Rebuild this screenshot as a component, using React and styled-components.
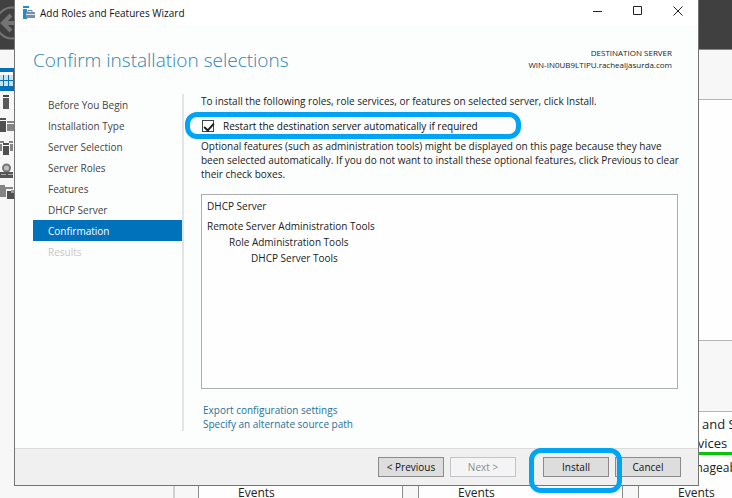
import React from "react";
import styled, { createGlobalStyle } from "styled-components";

const Global = createGlobalStyle`
  * { box-sizing: border-box; }
  body {
    margin: 0;
    background: #f7f7f7;
    color: #222;
    font: 10px/14px "Open Sans", "Noto Sans", sans-serif;
  }
  h1, h2, p, ul { margin: 0; padding: 0; }
  ul { list-style: none; }
`;

const Desktop = styled.div`
  position: relative;
  min-height: 100vh;
  overflow: hidden;
`;

/* Server Manager, behind the wizard */
const Manager = styled.div`
  position: absolute;
  inset: 0;
  display: flex;
  flex-direction: column;
  overflow: hidden;
`;

const ManagerBar = styled.div`
  flex: none;
  height: 50px;
  background: #404040;
  border-bottom: 1px solid #8a8a8a;
`;

const BackIcon = styled.svg`
  display: block;
  width: 32px;
  height: 50px;
  margin-left: -3px;
`;

const ManagerBody = styled.div`
  flex: 1;
  display: flex;
  min-height: 0;
`;

const SideBar = styled.div`
  flex: none;
  width: 175px;
  padding-top: 18px;
  border-right: 2px solid #d0d0d0;
`;

const SideItem = styled.div`
  height: 23px;
  background: ${(p) => (p.$active ? "#0072bc" : "transparent")};

  svg {
    display: block;
    width: 15px;
    height: 23px;
  }
`;

const Dashboard = styled.div`
  flex: 1;
  min-width: 0;
  display: flex;
  flex-direction: column;
`;

const Strip = styled.div`
  flex: none;
  height: ${(p) => p.$height};
  background: ${(p) => (p.$light ? "#fefefe" : "#f7f7f7")};
  border-bottom: 1px solid #b4b4b4;
`;

const Tiles = styled.div`
  flex: 1;
  display: grid;
  grid-template-columns: repeat(3, 205px);
  gap: 15px;
  padding-left: 23px;
`;

const Tile = styled.section`
  display: grid;
  grid-template-rows: 43px 26px 24px;
  align-items: center;
  background: #fefefe;
  border: 1px solid #8c8c8c;
  border-top: 0;
  font-size: 12px;
  line-height: 14px;
  white-space: nowrap;
`;

const TileTitle = styled.h2`
  align-self: stretch;
  padding: 3px 0 0 39px;
  border-bottom: 3px solid #0cc20c;
  font-size: 13px;
  font-weight: 400;
  line-height: 19px;
`;

const TileRow = styled.p`
  grid-row: ${(p) => p.$row};
  padding-left: 39px;
`;

/* Wizard window */
const Wizard = styled.main`
  position: relative;
  margin: 0 33px 0 14px;
  background: #fcfdfd;
  border: 1px solid #747474;
  border-top: 0;
`;

const TitleBar = styled.header`
  display: flex;
  align-items: center;
  height: 25px;
  padding: 0 6px 0 8px;
  gap: 5px;
  background: #fff;
  color: #111;
`;

const TitleText = styled.span`
  flex: 1;
`;

const WindowButton = styled.button`
  width: 28px;
  height: 24px;
  margin-left: 12px;
  padding: 0;
  border: 0;
  background: transparent;

  svg {
    display: block;
    margin: auto;
  }
`;

const Head = styled.div`
  display: flex;
  justify-content: space-between;
  height: 69px;
  padding: 20px 26px 0 18px;
`;

const Heading = styled.h1`
  color: #3484ad;
  font-size: 19px;
  font-weight: 300;
  line-height: 30px;
`;

const Destination = styled.p`
  padding-top: 2px;
  font-size: 8px;
  line-height: 12px;
  text-align: right;
`;

const Columns = styled.div`
  display: flex;
  padding: 0 20px 17px 18px;
`;

const Steps = styled.nav`
  flex: none;
  width: 151px;
  border-right: 2px solid #e2e5e7;
`;

const Step = styled.button`
  display: block;
  width: 149px;
  height: 21px;
  padding: 2px 0 0 15px;
  border: 0;
  background: ${(p) => (p.$current ? "#0072bc" : "transparent")};
  color: ${(p) => (p.$current ? "#fff" : p.disabled ? "#c8c8c8" : "#444")};
  font: inherit;
  line-height: 19px;
  text-align: left;
`;

const Content = styled.div`
  flex: 1;
  min-width: 0;
  height: 337px;
  padding-left: 17px;
`;

const Restart = styled.label`
  position: relative;
  display: flex;
  align-items: center;
  gap: 9px;
  width: fit-content;
  height: 27px;
  margin: 4px 0 0 1px;
  color: #111;
`;

const Highlight = styled.span`
  position: absolute;
  inset: ${(p) => p.$inset};
  border: 5px solid #00a4f4;
  border-radius: 12px;
  pointer-events: none;
`;

const CheckBox = styled.input`
  appearance: none;
  width: 12px;
  height: 12px;
  margin: 0;
  border: 1px solid #444;
  background: #fff;

  &:checked::before {
    content: "";
    display: block;
    width: 4px;
    height: 8px;
    margin: 0 3px;
    border: solid #222;
    border-width: 0 2px 2px 0;
    transform: rotate(42deg);
  }
`;

const Intro = styled.p`
  margin-right: -12px;
  color: #222;
`;

const Selections = styled.ul`
  height: 195px;
  margin-top: 13px;
  padding: 3px 5px;
  border: 1px solid #a9adb0;
  background: #fefefe;
  line-height: 16px;
`;

const Selection = styled.li`
  padding-left: ${(p) => p.$level * 22}px;
  margin-bottom: ${(p) => (p.$last ? "4px" : "0")};
`;

const Links = styled.div`
  display: flex;
  flex-direction: column;
  align-items: flex-start;
  padding: 14px 2px 0;

  a {
    color: #1f7299;
    text-decoration: none;
  }
`;

const Footer = styled.footer`
  display: flex;
  justify-content: flex-end;
  height: 37px;
  padding: 8px 17px 0;
  border-top: 1px solid #dcdcdc;
  background: #f0f0f0;
`;

const FooterButton = styled.button`
  width: 66px;
  height: 20px;
  padding: 0;
  border: 1px solid ${(p) => (p.disabled ? "#c4c4c8" : "#8a8a8a")};
  background: ${(p) => (p.disabled ? "#f4f4f4" : "#dddddd")};
  color: ${(p) => (p.disabled ? "#8c8c8c" : "#111")};
  font: inherit;
`;

const ButtonSlot = styled.div`
  position: relative;
  z-index: ${(p) => (p.$raised ? 1 : 0)};
  margin-left: ${(p) => p.$gap};
`;

const STEPS = [
  "Before You Begin",
  "Installation Type",
  "Server Selection",
  "Server Roles",
  "Features",
  "DHCP Server",
  "Confirmation",
  "Results",
];

const SELECTIONS = [
  { name: "DHCP Server", level: 0, last: true },
  { name: "Remote Server Administration Tools", level: 0 },
  { name: "Role Administration Tools", level: 1 },
  { name: "DHCP Server Tools", level: 2 },
];

const SIDE_ICONS = [
  <>
    <path d="M0 4h14v14H0z" fill="#c9e3f3" />
    <path d="M0 4h14v3H0z" fill="#fff" />
    <path d="M3.5 7v11M8.5 7v11M0 12.500h14M13.500 4v14" stroke="#0072bc" />
  </>,
  <>
    <path d="M3 4h6v2H3z" fill="#444" />
    <path d="M3 7h6v11H3z" fill="#5a5a5a" />
  </>,
  <>
    <path d="M0 4h6v2H0zM0 7h6v11H0z" fill="#505050" />
    <path d="M7 7h7v2H7zM7 10h7v7H7z" fill="#858585" />
  </>,
  <>
    <path d="M0 4h4v2H0zM9 4h4v2H9zM0 7h2v7H0zM10 7h3v7h-3z" fill="#858585" />
    <path d="M3 6h6v2H3zM3 9h6v9H3z" fill="#505050" />
  </>,
  <>
    <circle cx="6.5" cy="8" r="3.500" fill="#c0c0c0" stroke="#777" strokeWidth="2" />
    <path d="M0 12h13v6H0z" fill="#555" />
    <path d="M1 14.500h5M8 14.500h5" stroke="#aaa" />
  </>,
  <>
    <path d="M0 2h5v2h8v2H6v8H0z" fill="#858585" />
    <path d="M7 8h6l1 2v6H7z" fill="#505050" />
    <path d="M11 7h3v3h-3z" fill="#999" />
  </>,
];

function ServerManager() {
  return (
    <Manager>
      <ManagerBar>
        <BackIcon viewBox="0 0 32 50" fill="none" stroke="#747474">
          <circle cx="15" cy="23" r="15.500" strokeWidth="2" />
          <path d="M21 23H7M14 15l-8 8 8 8" strokeWidth="4" />
        </BackIcon>
      </ManagerBar>
      <ManagerBody>
        <SideBar>
          {SIDE_ICONS.map((icon, i) => (
            <SideItem key={i} $active={i === 0}>
              <svg viewBox="0 0 15 23">{icon}</svg>
            </SideItem>
          ))}
        </SideBar>
        <Dashboard>
          <Strip $height="50px" />
          <Strip $height="241px" $light />
          <Strip $height="71px" />
          <Tiles>
            <Tile>
              <TileRow $row={3}>Events</TileRow>
            </Tile>
            <Tile>
              <TileRow $row={3}>Events</TileRow>
            </Tile>
            <Tile>
              <TileTitle>
                File and Storage
                <br />
                Services
              </TileTitle>
              <TileRow $row={2}>Manageability</TileRow>
              <TileRow $row={3}>Events</TileRow>
            </Tile>
          </Tiles>
        </Dashboard>
      </ManagerBody>
    </Manager>
  );
}

export default function App() {
  return (
    <Desktop>
      <Global />
      <ServerManager />
      <Wizard>
        <TitleBar>
          <svg width="12" height="13" viewBox="0 0 12 13" aria-hidden="true">
            <path d="M0 0h6v2H0zM0 3h4v10H0z" fill="#1a8fd0" />
            <path d="M5 6V4.500h4V6" fill="none" stroke="#6a8299" />
            <path d="M3 6h9v6H3z" fill="#7890a6" />
            <path d="M3 8.500h9" stroke="#dbe5ec" />
          </svg>
          <TitleText>Add Roles and Features Wizard</TitleText>
          <div>
            <WindowButton aria-label="Minimize">
              <svg width="10" height="10" viewBox="0 0 10 10">
                <path d="M0 5.500h9" stroke="#222" />
              </svg>
            </WindowButton>
            <WindowButton aria-label="Maximize">
              <svg width="10" height="10" viewBox="0 0 10 10">
                <path d="M.5.5h8v8h-8z" fill="none" stroke="#222" />
              </svg>
            </WindowButton>
            <WindowButton aria-label="Close">
              <svg width="10" height="10" viewBox="0 0 10 10">
                <path d="M.5.5l9 9M9.500.5l-9 9" stroke="#222" />
              </svg>
            </WindowButton>
          </div>
        </TitleBar>
        <Head>
          <Heading>Confirm installation selections</Heading>
          <Destination>
            DESTINATION SERVER
            <br />
            WIN-IN0UB9LTIPU.rachealjasurda.com
          </Destination>
        </Head>
        <Columns>
          <Steps aria-label="Wizard steps">
            {STEPS.map((step) => (
              <Step key={step} $current={step === "Confirmation"} disabled={step === "Results"}>
                {step}
              </Step>
            ))}
          </Steps>
          <Content>
            <Intro>
              To install the following roles, role services, or features on selected server, click
              Install.
            </Intro>
            <Restart>
              <CheckBox type="checkbox" defaultChecked />
              Restart the destination server automatically if required
              <Highlight $inset="0 -43px 0 -17px" />
            </Restart>
            <Intro>
              Optional features (such as administration tools) might be displayed on this page
              because they have
              <br />
              been selected automatically. If you do not want to install these optional features,
              click Previous to clear
              <br />
              their check boxes.
            </Intro>
            <Selections>
              {SELECTIONS.map((s) => (
                <Selection key={s.name} $level={s.level} $last={s.last}>
                  {s.name}
                </Selection>
              ))}
            </Selections>
            <Links>
              <a href="#export">Export configuration settings</a>
              <a href="#source">Specify an alternate source path</a>
            </Links>
          </Content>
        </Columns>
        <Footer>
          <ButtonSlot $gap="0">
            <FooterButton>&lt; Previous</FooterButton>
          </ButtonSlot>
          <ButtonSlot $gap="6px">
            <FooterButton disabled>Next &gt;</FooterButton>
          </ButtonSlot>
          <ButtonSlot $gap="27px" $raised>
            <FooterButton>Install</FooterButton>
            <Highlight $inset="-9px -13px -8px -14px" />
          </ButtonSlot>
          <ButtonSlot $gap="6px">
            <FooterButton>Cancel</FooterButton>
          </ButtonSlot>
        </Footer>
      </Wizard>
    </Desktop>
  );
}
